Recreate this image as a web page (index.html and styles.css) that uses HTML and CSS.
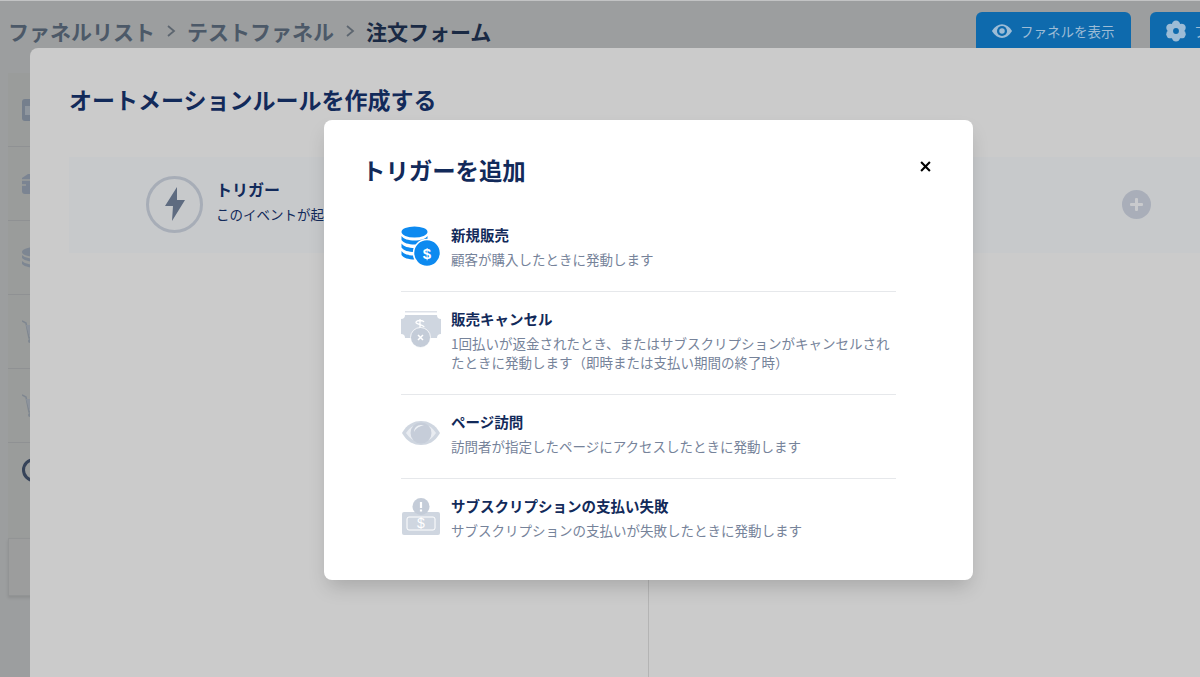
FILE: index.html
```html
<!DOCTYPE html>
<html lang="ja">

<head>
    <meta charset="UTF-8">
    <meta name="viewport" content="width=device-width, initial-scale=1.0">
    <title>オートメーションルールを作成する</title>
    <link rel="stylesheet" href="styles.css">
</head>

<body>
    <header class="topbar">
        <nav class="crumbs">
            <span>ファネルリスト</span>
            <svg class="crumb-sep" viewBox="0 0 10 14"><path d="M2 2l6 5-6 5" fill="none" stroke="currentColor" stroke-width="1.8"/></svg>
            <span>テストファネル</span>
            <svg class="crumb-sep" viewBox="0 0 10 14"><path d="M2 2l6 5-6 5" fill="none" stroke="currentColor" stroke-width="1.8"/></svg>
            <span class="crumb-now">注文フォーム</span>
        </nav>
        <div class="top-actions">
            <button class="top-btn">
                <svg class="top-icon" viewBox="0 0 24 24"><path d="M1 12C4 7 8 4.500 12 4.500S20 7 23 12c-3 5-7 7.500-11 7.500S4 17 1 12z" fill="#9dbcd6"/><circle cx="12" cy="12" r="5.500" fill="#0e6aad"/><circle cx="12" cy="12" r="3" fill="#9dbcd6"/></svg>
                ファネルを表示
            </button>
            <button class="top-btn">
                <svg class="top-icon" viewBox="0 0 24 24"><g fill="#9dbcd6"><circle cx="12" cy="5" r="4.500"/><circle cx="12" cy="19" r="4.500"/><circle cx="5.900" cy="8.500" r="4.500"/><circle cx="18.100" cy="8.500" r="4.500"/><circle cx="5.900" cy="15.500" r="4.500"/><circle cx="18.100" cy="15.500" r="4.500"/><circle cx="12" cy="12" r="6"/></g><circle cx="12" cy="12" r="3.200" fill="#0e6aad"/></svg>
                ファネルを設定
            </button>
        </div>
    </header>

    <aside class="steps">
        <div class="step">
            <svg class="step-mark" viewBox="0 0 20 24"><rect y="1" width="20" height="22" rx="3" fill="#757f8d"/><rect x="3" y="8" width="14" height="9" fill="#8f969e"/></svg>
        </div>
        <div class="step">
            <svg class="step-mark" viewBox="0 0 20 24"><path d="M0 6l6-4h14v20H3a3 3 0 0 1-3-3z" fill="#7b8492"/><path d="M0 8h20M0 13h4" stroke="#9a9c9b" stroke-width="1.500"/></svg>
        </div>
        <div class="step">
            <svg class="step-mark" viewBox="0 0 20 24"><ellipse cx="14" cy="6" rx="14" ry="5" fill="#7d8692"/><path d="M0 9c3 3 9 4 20 4v3C9 16 3 15 0 12zM0 15c3 3 9 4 20 4v3C9 22 3 21 0 18z" fill="#7d8692"/></svg>
        </div>
        <div class="step">
            <svg class="step-mark" viewBox="0 0 20 24"><path d="M0 1l4 2 3 15h13" fill="none" stroke="#7f8790" stroke-width="1.500"/><path d="M4 5h16v10H7z" fill="#8d939c"/><circle cx="8" cy="21" r="2" fill="#7f8790"/></svg>
        </div>
        <div class="step">
            <svg class="step-mark" viewBox="0 0 20 24"><path d="M0 1l4 2 3 15h13" fill="none" stroke="#7f8790" stroke-width="1.500"/><path d="M4 5h16v10H7z" fill="#8d939c"/><circle cx="8" cy="21" r="2" fill="#7f8790"/></svg>
        </div>
        <div class="step step-tall"><span class="step-ring"></span></div>
        <div class="step-foot"></div>
    </aside>

    <section class="panel">
        <h1 class="panel-title">オートメーションルールを作成する</h1>
        <div class="trigger-row">
            <div class="bolt">
                <svg viewBox="0 0 24 36" width="24" height="36"><path d="M14 1L2 20h8l-1 15 13-21h-8z" fill="#5e6b80"/></svg>
            </div>
            <div class="trigger-text">
                <strong>トリガー</strong>
                <span>このイベントが起こったとき</span>
            </div>
            <div class="plus"></div>
        </div>
        <div class="flow-line"></div>
    </section>

    <div class="modal">
        <div class="modal-head">
            <h2>トリガーを追加</h2>
            <svg class="close" viewBox="0 0 10 10"><path d="M1 1l8 8M9 1l-8 8" stroke="#000" stroke-width="1.900"/></svg>
        </div>
        <ul class="options">
            <li class="option">
                <svg class="option-icon" viewBox="0 0 40 40">
                    <ellipse cx="13.500" cy="6" rx="13" ry="5.500" fill="#0d8af0"/>
                    <path d="M.5 10c2 3 7 4.500 13 4.500s11-1.500 13-4.500v4c-2 3-7 4.500-13 4.500S2.500 17 .5 14z" fill="#0d8af0"/>
                    <path d="M.5 17.500c2 3 7 4.500 13 4.500v4c-6 0-11-1.500-13-4.500z" fill="#0d8af0"/>
                    <path d="M.5 25c2 3 7 4.500 13 4.500v4c-6 0-11-1.500-13-4.500z" fill="#0d8af0"/>
                    <circle cx="26" cy="27" r="13.500" fill="#0d8af0" stroke="#fff" stroke-width="1.500"/>
                    <text x="26" y="32.500" class="dollar">$</text>
                </svg>
                <div class="option-text">
                    <h3>新規販売</h3>
                    <p>顧客が購入したときに発動します</p>
                </div>
            </li>
            <li class="option">
                <svg class="option-icon" viewBox="0 0 40 40">
                    <path d="M4 1h32v1.500H4z" fill="#dde1e8"/>
                    <rect y="5" width="40" height="23" fill="#cfd6e0"/>
                    <circle cx="0" cy="5" r="4" fill="#fff"/>
                    <circle cx="40" cy="5" r="4" fill="#fff"/>
                    <circle cx="0" cy="28" r="4" fill="#fff"/>
                    <circle cx="40" cy="28" r="4" fill="#fff"/>
                    <path d="M19 9v12M23 12c-1-2-7-2-8 0s8 3 8 5" fill="none" stroke="#fff" stroke-width="1.300"/>
                    <circle cx="19.500" cy="27.500" r="10" fill="#c4ccd8" stroke="#fff" stroke-width=".8"/>
                    <path d="M17 25l5 5M22 25l-5 5" stroke="#fff" stroke-width="1.500"/>
                </svg>
                <div class="option-text">
                    <h3>販売キャンセル</h3>
                    <p>1回払いが返金されたとき、またはサブスクリプションがキャンセルされたときに発動します（即時または支払い期間の終了時）</p>
                </div>
            </li>
            <li class="option">
                <svg class="option-icon" viewBox="0 0 40 40">
                    <path d="M1 20C6 11 13 8 20 8s14 3 19 12c-5 9-12 12-19 12S6 29 1 20z" fill="#cfd6e0"/>
                    <path d="M5 20c4-6 9-9 15-9s11 3 15 9c-4 6-9 9-15 9S9 26 5 20z" fill="#fff" opacity=".55"/>
                    <circle cx="20" cy="20" r="10.500" fill="#c6cdd9"/>
                    <path d="M13 19c0-4 3-7 7-7 1 0 2 .2 3 .6-4 .4-8 2.400-10 6.400z" fill="#eef1f5"/>
                </svg>
                <div class="option-text">
                    <h3>ページ訪問</h3>
                    <p>訪問者が指定したページにアクセスしたときに発動します</p>
                </div>
            </li>
            <li class="option">
                <svg class="option-icon" viewBox="0 0 40 40">
                    <rect x="1" y="15" width="38" height="23" rx="2" fill="#cfd6e0"/>
                    <rect x="6" y="20" width="28" height="13" rx="2" fill="none" stroke="#fff" stroke-width="1"/>
                    <circle cx="20" cy="9.500" r="8.500" fill="#c4ccd8"/>
                    <path d="M20 5v6M20 12.500v2" stroke="#fff" stroke-width="2.200"/>
                    <text x="20" y="31" class="dollar dollar-small">$</text>
                </svg>
                <div class="option-text">
                    <h3>サブスクリプションの支払い失敗</h3>
                    <p>サブスクリプションの支払いが失敗したときに発動します</p>
                </div>
            </li>
        </ul>
    </div>
</body>

</html>
```

FILE: styles.css
```css
* {
    margin: 0;
    padding: 0;
    box-sizing: border-box;
}

html,
body {
    height: 100%;
    overflow: hidden;
}

body {
    position: relative;
    background-color: #9c9e9f;
    border-top: 1px solid #c2c3c4;
    font-family: "Noto Sans CJK JP", "Noto Sans", sans-serif;
}

.topbar {
    display: flex;
    justify-content: space-between;
    height: 72px;
    padding: 11px 0 0 8px;
    overflow: hidden;
}

.crumbs {
    display: flex;
    align-items: center;
    gap: 10px;
    height: 38px;
    font-size: 21px;
    font-weight: 700;
    color: #4c5968;
    white-space: nowrap;
}

.crumb-sep {
    width: 10px;
    height: 14px;
    margin: 0 1px;
    color: #5d6670;
}

.crumb-now {
    color: #1a2a44;
}

.top-actions {
    display: flex;
    gap: 19px;
    margin-right: -105px;
}

.top-btn {
    display: flex;
    align-items: center;
    gap: 7px;
    width: 155px;
    height: 50px;
    padding: 0 0 12px 15px;
    border: none;
    border-radius: 6px;
    background-color: #0e6aad;
    color: #9dbcd6;
    font-family: inherit;
    font-size: 13.500px;
}

.top-icon {
    width: 22px;
    height: 22px;
}

.steps {
    width: 60px;
    margin-left: 8px;
    background-color: #9a9c9b;
}

.step {
    display: flex;
    align-items: center;
    height: 74px;
    padding-left: 14px;
    border-bottom: 1px solid #8f9193;
}

.step-tall {
    height: 95px;
    align-items: flex-start;
    padding-top: 15px;
    border-bottom: none;
}

.step-foot {
    height: 58px;
    background-color: #9c9d9d;
    border: 1px solid #929495;
    box-shadow: 0 2px 3px rgba(0, 0, 0, .1);
}

.step-mark {
    width: 20px;
    height: 24px;
}

.step-ring {
    width: 24px;
    height: 24px;
    border: 3px solid #364359;
    border-radius: 50%;
}

/* window behind the modal */
.panel {
    position: absolute;
    top: 47px;
    left: 30px;
    right: 0;
    bottom: 0;
    display: flex;
    flex-direction: column;
    padding: 35px 0 0 39px;
    background-color: #cbcbcb;
    border-radius: 8px 0 0 0;
}

.panel-title {
    height: 74px;
    font-size: 23px;
    line-height: 32px;
    font-weight: 700;
    color: #122a5a;
}

.trigger-row {
    display: flex;
    align-items: center;
    height: 96px;
    padding: 0 49px 0 77px;
    background-color: #c7c9cb;
}

.bolt {
    display: flex;
    align-items: center;
    justify-content: center;
    width: 57px;
    height: 57px;
    margin: 0 13px 2px 0;
    border: 3px solid #a7adb7;
    border-radius: 50%;
}

.trigger-text {
    display: flex;
    flex-direction: column;
    flex: 1;
    gap: 4px;
    margin-bottom: 9px;
    color: #122a5a;
    font-size: 13.500px;
}

.trigger-text strong {
    font-size: 16px;
    line-height: 22px;
}

.plus {
    position: relative;
    width: 29px;
    height: 29px;
    margin-bottom: 2px;
    border-radius: 50%;
    background-color: #a9aeb9;
}

.plus::before,
.plus::after {
    content: "";
    position: absolute;
    background-color: #c9cacd;
    border-radius: 1px;
}

.plus::before {
    left: 8px;
    top: 13px;
    width: 13px;
    height: 3px;
}

.plus::after {
    left: 13px;
    top: 8px;
    width: 3px;
    height: 13px;
}

.flow-line {
    width: 1px;
    flex: 1;
    margin-left: 579px;
    background-color: #b4b4b4;
}

.modal {
    position: absolute;
    top: 119px;
    left: 324px;
    width: 649px;
    height: 460px;
    padding: 33px 39px 0;
    background-color: #fff;
    border-radius: 8px;
    box-shadow: 0 10px 20px -4px rgba(0, 0, 0, .18);
}

.modal-head {
    display: flex;
    justify-content: space-between;
    align-items: flex-start;
    height: 55px;
}

.modal-head h2 {
    margin-left: -1px;
    font-size: 23.400px;
    line-height: 34px;
    font-weight: 700;
    color: #122a5a;
}

.close {
    width: 11px;
    height: 11px;
    margin-top: 8px;
    margin-right: 3px;
}

.options {
    list-style: none;
    margin: 0 38px;
}

.option {
    display: flex;
    gap: 10px;
    padding: 16px 0 22px;
    border-top: 1px solid #e6e8eb;
}

.option:first-child {
    border-top: none;
}

.option-icon {
    flex-shrink: 0;
    width: 40px;
    height: 40px;
    margin-top: 2px;
}

.option-text h3 {
    font-size: 14.500px;
    line-height: 22px;
    font-weight: 700;
    color: #122a5a;
}

.option-text p {
    margin-top: 4px;
    font-size: 13.500px;
    line-height: 19px;
    color: #76839a;
}

.dollar {
    fill: #fff;
    font-family: "Liberation Sans", sans-serif;
    font-size: 15px;
    font-weight: 700;
    text-anchor: middle;
}

.dollar-small {
    font-size: 14px;
    font-weight: 400;
}
```
